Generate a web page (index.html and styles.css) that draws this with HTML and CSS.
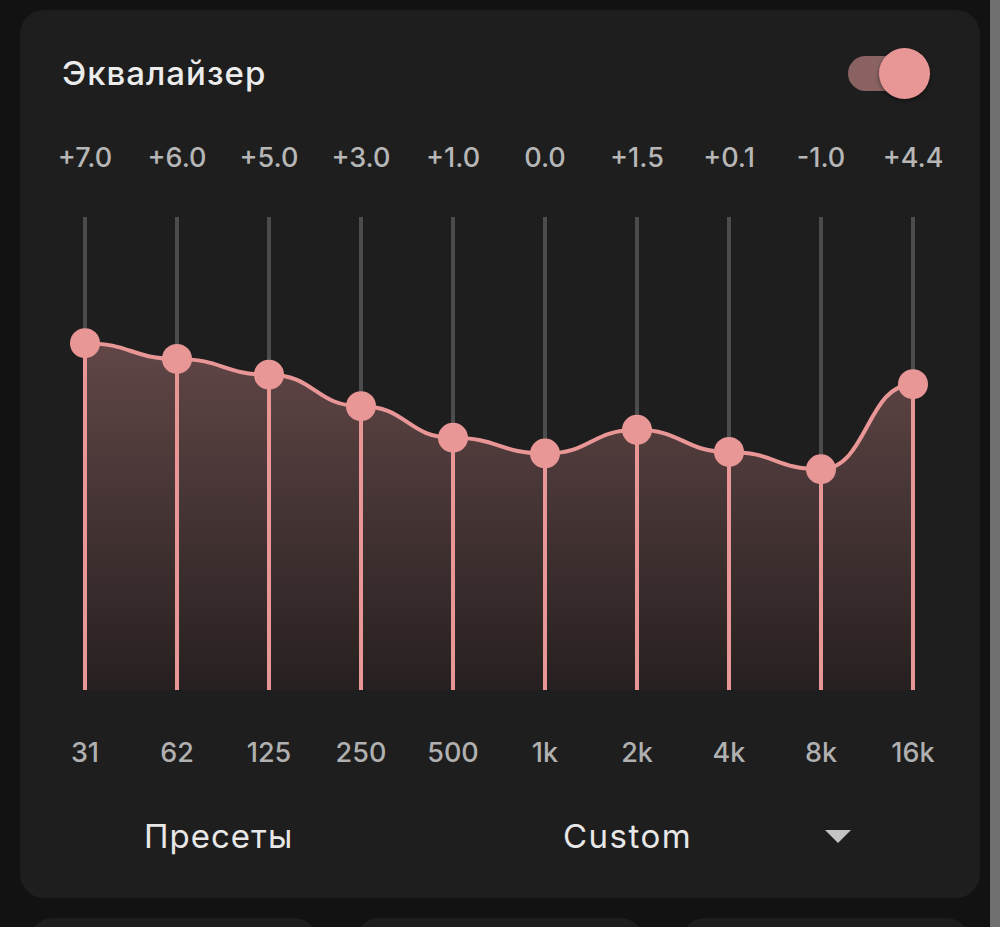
FILE: index.html
```html
<!DOCTYPE html>
<html lang="ru">

<head>
  <meta charset="UTF-8" />
  <title>Эквалайзер</title>
  <link rel="stylesheet" href="styles.css">
</head>

<body>
  <div class="screen">
    <div class="content">
      <div class="eq-card">
        <div class="eq-header">
          <h1>Эквалайзер</h1>
          <div class="switch">
            <div class="switch-track"></div>
            <div class="switch-thumb"></div>
          </div>
        </div>

        <div class="bands">
          <div class="band-values" id="bandValues"></div>
          <svg class="eq-chart" id="eqChart" width="920" height="500" viewBox="0 0 920 500"></svg>
          <div class="band-freqs" id="bandFreqs"></div>
        </div>

        <div class="presets">
          <span class="presets-label">Пресеты</span>
          <div class="preset-select">
            <span>Custom</span>
            <svg class="preset-arrow" width="26" height="13" viewBox="0 0 26 13">
              <path d="M0 0H26L13 13Z" />
            </svg>
          </div>
        </div>
      </div>

      <div class="cards-row">
        <div class="small-card"></div>
        <div class="small-card"></div>
        <div class="small-card"></div>
      </div>
    </div>
    <div class="scroll-edge"></div>
  </div>

  <script>
    const bands = [
      { freq: '31', gain: 7.0 },
      { freq: '62', gain: 6.0 },
      { freq: '125', gain: 5.0 },
      { freq: '250', gain: 3.0 },
      { freq: '500', gain: 1.0 },
      { freq: '1k', gain: 0.0 },
      { freq: '2k', gain: 1.5 },
      { freq: '4k', gain: 0.1 },
      { freq: '8k', gain: -1.0 },
      { freq: '16k', gain: 4.4 }
    ];

    const TOP = 17;
    const BOTTOM = 490;
    const COL = 92;
    const MAX_DB = 15;
    const PINK = '#e99696';

    const mid = (TOP + BOTTOM) / 2;
    const scale = (BOTTOM - TOP) / (MAX_DB * 2);
    const xOf = i => COL / 2 + i * COL;
    const yOf = g => mid - g * scale;

    function formatGain(g) {
      return (g > 0 ? '+' : '') + g.toFixed(1);
    }

    function renderLabels() {
      const values = document.getElementById('bandValues');
      const freqs = document.getElementById('bandFreqs');
      bands.forEach(band => {
        const v = document.createElement('span');
        v.textContent = formatGain(band.gain);
        values.appendChild(v);
        const f = document.createElement('span');
        f.textContent = band.freq;
        freqs.appendChild(f);
      });
    }

    function renderChart() {
      const pts = bands.map((b, i) => ({ x: xOf(i), y: yOf(b.gain) }));

      // smooth curve: horizontal tangents at every knob
      let curve = `M${pts[0].x} ${pts[0].y}`;
      for (let i = 1; i < pts.length; i++) {
        const a = pts[i - 1];
        const b = pts[i];
        const dx = (b.x - a.x) / 2;
        curve += ` C${a.x + dx} ${a.y} ${b.x - dx} ${b.y} ${b.x} ${b.y}`;
      }
      const last = pts[pts.length - 1];
      const area = `${curve} L${last.x} ${BOTTOM} L${pts[0].x} ${BOTTOM} Z`;

      let svg = `
        <defs>
          <linearGradient id="eqFill" gradientUnits="userSpaceOnUse" x1="0" y1="144" x2="0" y2="${BOTTOM}">
            <stop offset="0" stop-color="#614646" />
            <stop offset="1" stop-color="#272020" />
          </linearGradient>
        </defs>
        <path d="${area}" fill="url(#eqFill)" />`;

      pts.forEach(p => {
        svg += `<line x1="${p.x}" y1="${TOP}" x2="${p.x}" y2="${BOTTOM}" stroke="#4c4c4c" stroke-width="4" />`;
        svg += `<line x1="${p.x}" y1="${p.y}" x2="${p.x}" y2="${BOTTOM}" stroke="${PINK}" stroke-width="4" />`;
      });

      svg += `<path d="${curve}" fill="none" stroke="${PINK}" stroke-width="4" />`;

      pts.forEach(p => {
        svg += `<circle cx="${p.x}" cy="${p.y}" r="15" fill="${PINK}" />`;
      });

      document.getElementById('eqChart').innerHTML = svg;
    }

    renderLabels();
    renderChart();
  </script>
</body>

</html>
```

FILE: styles.css
```css
body {
  margin: 0;
  background-color: #121212;
  font-family: 'Inter', 'Roboto', sans-serif;
}

.screen {
  display: flex;
  height: 100vh;
  overflow: hidden;
}

.content {
  flex: 1;
  padding: 10px 10px 0 20px;
}

.scroll-edge {
  width: 10px;
  background: #6f6f6f;
}

.eq-card {
  background: #1e1e1e;
  border-radius: 24px;
  height: 888px;
  padding-top: 37px;
  box-sizing: border-box;
}

.eq-header {
  display: flex;
  align-items: center;
  justify-content: space-between;
  height: 52px;
  padding: 0 50px 0 42px;
}

h1 {
  margin: 0;
  font-size: 33px;
  line-height: 40px;
  font-weight: 500;
  letter-spacing: 1px;
  color: #ececec;
}

.switch {
  position: relative;
  width: 82px;
  height: 51px;
}

.switch-track {
  position: absolute;
  left: 0;
  top: 8px;
  width: 66px;
  height: 35px;
  border-radius: 18px;
  background: #8a6262;
}

.switch-thumb {
  position: absolute;
  right: 0;
  top: 0;
  width: 51px;
  height: 51px;
  border-radius: 50%;
  background: #e99696;
  box-shadow: 0 2px 4px rgba(0, 0, 0, 0.4);
}

.bands {
  margin: 42px 0 0 19px;
  width: 920px;
}

.band-values,
.band-freqs {
  display: grid;
  grid-template-columns: repeat(10, 1fr);
  text-align: center;
  font-size: 27px;
  line-height: 34px;
  font-weight: 500;
}

.band-values {
  color: #b6b6b6;
}

.eq-chart {
  display: block;
  margin-top: 25px;
}

.band-freqs {
  margin-top: 36px;
  color: #b0b0b0;
}

.presets {
  display: flex;
  align-items: center;
  margin-top: 46px;
  padding-left: 124px;
  font-size: 33px;
  line-height: 40px;
  color: #e8e8e8;
}

.presets-label {
  width: 419px;
  letter-spacing: 1px;
}

.preset-select {
  display: flex;
  align-items: center;
  justify-content: space-between;
  width: 288px;
  letter-spacing: 1.5px;
}

.preset-arrow {
  fill: #c4c4c4;
}

.cards-row {
  display: flex;
  gap: 37px;
  margin-top: 20px;
  padding-left: 9px;
}

.small-card {
  width: 289px;
  height: 120px;
  background: #1e1e1e;
  border-radius: 24px;
}
```
